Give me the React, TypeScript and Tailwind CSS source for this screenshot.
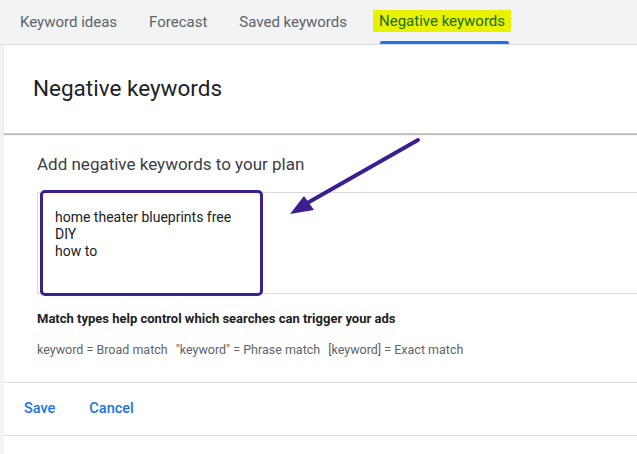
export default function App() {
  const font = { fontFamily: 'Roboto, "Noto Sans", Arial, sans-serif' };
  return (
    <div className="relative w-[637px] h-[454px] overflow-hidden bg-[#f1f3f4] flex flex-col" style={font}>
      {/* Tabs */}
      <div className="h-[45px] flex items-stretch pl-[20px] gap-[32px] text-[15px] text-[#5f6368] border-b border-[#dadce0]">
        <div className="flex items-center">Keyword ideas</div>
        <div className="flex items-center">Forecast</div>
        <div className="flex items-center">Saved keywords</div>
        <div className="relative flex items-center">
          <span className="bg-[#e8f200] text-[#216a10] px-[6px] h-[22px] flex items-center -ml-[6px] -mt-[2px]">Negative keywords</span>
          <div className="absolute left-[1px] right-[2px] bottom-0 h-[3px] bg-[#1a73e8] rounded-t-[2px]" />
        </div>
      </div>
      {/* Panel */}
      <div className="flex-1 ml-[4px] bg-white flex flex-col">
        <div className="h-[89px] flex items-center pl-[29px] text-[22.5px] text-[#202124] shadow-[0_1px_1px_rgba(0,0,0,0.25)] border-b border-[#c8c8c8]">
          Negative keywords
        </div>
        <div className="pl-[33px] pt-[18px] text-[17px] text-[#3c4043] leading-[24px]">Add negative keywords to your plan</div>
        <div className="relative ml-[33px] mt-[16px] h-[102px] border-t border-b border-l border-[#dadce0]">
          <div className="absolute left-[2px] top-[-3px] w-[223px] h-[106px] border-[3px] border-[#3b1f91] rounded-[5px] pl-[12px] pt-[16px] text-[14px] leading-[17px] text-[#202124]">
            <div>home theater blueprints free</div>
            <div>DIY</div>
            <div>how to</div>
          </div>
        </div>
        <div className="pl-[33px] pt-[16px] text-[13px] font-bold text-[#202124] leading-[17px]">
          Match types help control which searches can trigger your ads
        </div>
        <div className="pl-[33px] pt-[14px] flex gap-[8px] text-[12.5px] text-[#5f6368] leading-[17px]">
          <span>keyword = Broad match</span>
          <span>"keyword" = Phrase match</span>
          <span>[keyword] = Exact match</span>
        </div>
        <div className="mt-[24px] border-t border-[#dadce0] h-[53px] flex items-center pl-[20px] gap-[34px] text-[14.5px] text-[#1a73e8] font-medium">
          <span>Save</span>
          <span>Cancel</span>
        </div>
        <div className="border-t border-[#dadce0]" />
      </div>
      {/* Arrow annotation */}
      <svg className="absolute left-0 top-0 pointer-events-none" width="637" height="454">
        <line x1="418" y1="140" x2="302" y2="206" stroke="#3b1f91" strokeWidth="4" strokeLinecap="round" />
        <polygon points="290,214 304,196 314,210" fill="#3b1f91" />
      </svg>
    </div>
  );
}
